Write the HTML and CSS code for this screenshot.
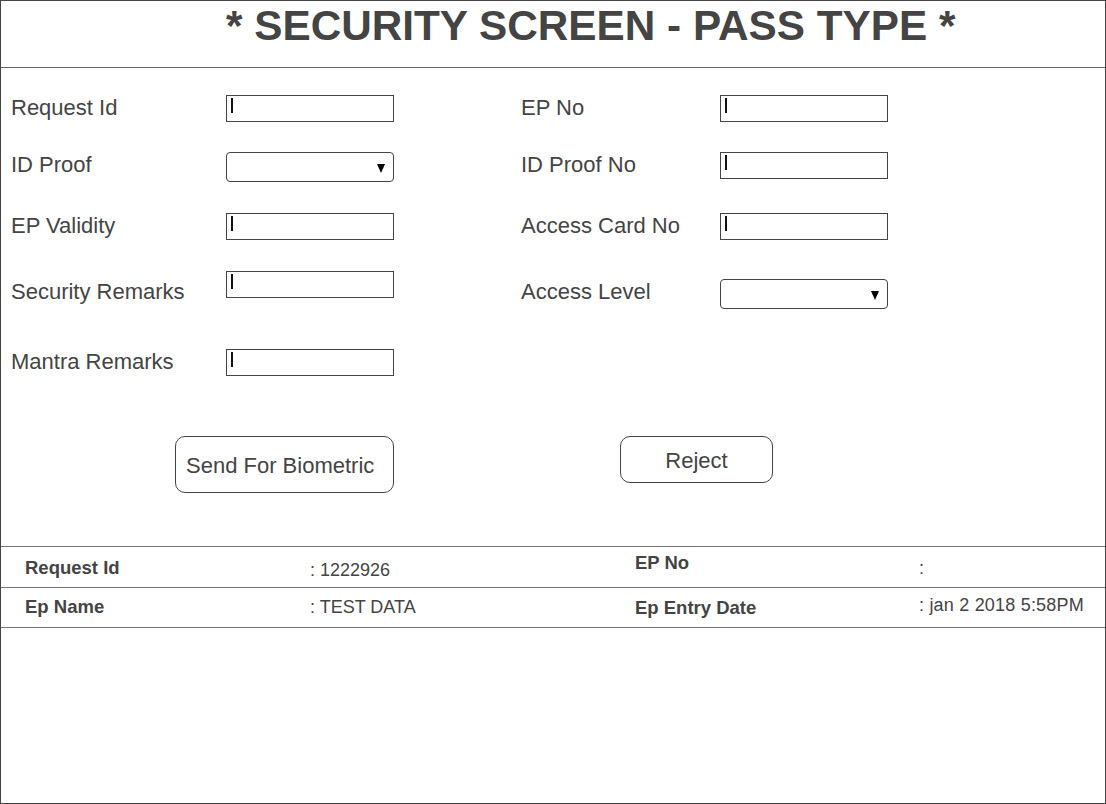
FILE: index.html
```html
<!DOCTYPE html>
<html lang="en">
<head>
<meta charset="utf-8">
<title>Security Screen - Pass Type</title>
<link rel="stylesheet" href="styles.css">
</head>
<body>
<div class="screen">
  <header class="title-bar">
    <h1 class="title">* SECURITY SCREEN - PASS TYPE *</h1>
  </header>

  <section class="form">
    <div class="label">Request Id</div>
    <div class="input"><span class="caret"></span></div>
    <div class="label">EP No</div>
    <div class="input"><span class="caret"></span></div>

    <div class="label">ID Proof</div>
    <div class="select"><span class="arrow"></span></div>
    <div class="label">ID Proof No</div>
    <div class="input"><span class="caret"></span></div>

    <div class="label">EP Validity</div>
    <div class="input"><span class="caret"></span></div>
    <div class="label">Access Card No</div>
    <div class="input"><span class="caret"></span></div>

    <div class="label low">Security Remarks</div>
    <div class="input"><span class="caret"></span></div>
    <div class="label low">Access Level</div>
    <div class="select low"><span class="arrow"></span></div>

    <div class="label">Mantra Remarks</div>
    <div class="input"><span class="caret"></span></div>
  </section>

  <div class="actions">
    <button class="btn btn-bio">Send For Biometric</button>
    <button class="btn btn-reject">Reject</button>
  </div>

  <section class="summary">
    <div class="srow first">
      <div class="skey k1">Request Id</div>
      <div class="sval v1">: 1222926</div>
      <div class="skey k2">EP No</div>
      <div class="sval v2">:</div>
    </div>
    <div class="srow second">
      <div class="skey k3">Ep Name</div>
      <div class="sval v3">: TEST DATA</div>
      <div class="skey k4">Ep Entry Date</div>
      <div class="sval v4">: jan 2 2018 5:58PM</div>
    </div>
  </section>
</div>
</body>
</html>
```

FILE: styles.css
```css
html, body {
  margin: 0;
  padding: 0;
  background: #fff;
}

body {
  font-family: "Liberation Sans", Arial, sans-serif;
  color: #444;
}

.screen {
  width: 1106px;
  height: 804px;
  box-sizing: border-box;
  border: 1px solid #444;
}

.title-bar {
  height: 66px;
  border-bottom: 1px solid #666;
  padding-left: 225px;
}

.title {
  margin: 0;
  padding-top: 1px;
  font-size: 42.3px;
  line-height: 48px;
  font-weight: bold;
  color: #444;
  white-space: nowrap;
}

.form {
  display: grid;
  grid-template-columns: 215px 295px 199px 168px;
  grid-template-rows: 57px 61px 58px 78px 27px;
  padding: 27px 0 0 10px;
  align-items: start;
}

.label {
  font-size: 22px;
  line-height: 26px;
  white-space: nowrap;
}

.input {
  width: 168px;
  height: 27px;
  box-sizing: border-box;
  border: 1px solid #444;
  padding: 2px 0 0 4px;
}

.caret {
  display: block;
  width: 2px;
  height: 15px;
  background: #111;
}

.select {
  width: 168px;
  height: 30px;
  box-sizing: border-box;
  border: 1px solid #444;
  border-radius: 4px;
  display: flex;
  align-items: center;
  justify-content: flex-end;
  padding-right: 8px;
}

.arrow {
  width: 0;
  height: 0;
  border-left: 4.5px solid transparent;
  border-right: 4.5px solid transparent;
  border-top: 9px solid #000;
  margin-top: 2px;
}

.low {
  margin-top: 8px;
}

.actions {
  display: flex;
  align-items: flex-start;
  gap: 226px;
  padding-left: 174px;
  margin-top: 60px;
}

.btn {
  font-family: "Liberation Sans", Arial, sans-serif;
  font-size: 22px;
  color: #444;
  background: #fff;
  border: 1px solid #444;
  border-radius: 10px;
  box-sizing: border-box;
  margin: 0;
}

.btn-bio {
  width: 219px;
  height: 57px;
  text-align: left;
  padding: 2px 0 0 10px;
}

.btn-reject {
  width: 153px;
  height: 47px;
  text-align: center;
  padding: 2px 0 0 0;
}

.summary {
  margin-top: 53px;
  border-top: 1px solid #777;
}

.srow {
  display: grid;
  grid-template-columns: 285px 325px 284px 1fr;
  padding-left: 24px;
  border-bottom: 1px solid #777;
  align-items: start;
}

.srow.first {
  height: 40px;
}

.srow.second {
  height: 39px;
}

.skey {
  font-weight: bold;
  font-size: 18.5px;
  line-height: 20px;
  white-space: nowrap;
}

.sval {
  font-size: 18px;
  line-height: 20px;
  white-space: nowrap;
}

.k1 { margin-top: 11px; }
.v1 { margin-top: 13px; }
.k2 { margin-top: 6px; }
.v2 { margin-top: 11px; }
.k3 { margin-top: 9px; }
.v3 { margin-top: 9px; }
.k4 { margin-top: 10px; }
.v4 { margin-top: 7px; letter-spacing: 0.2px; }
```
